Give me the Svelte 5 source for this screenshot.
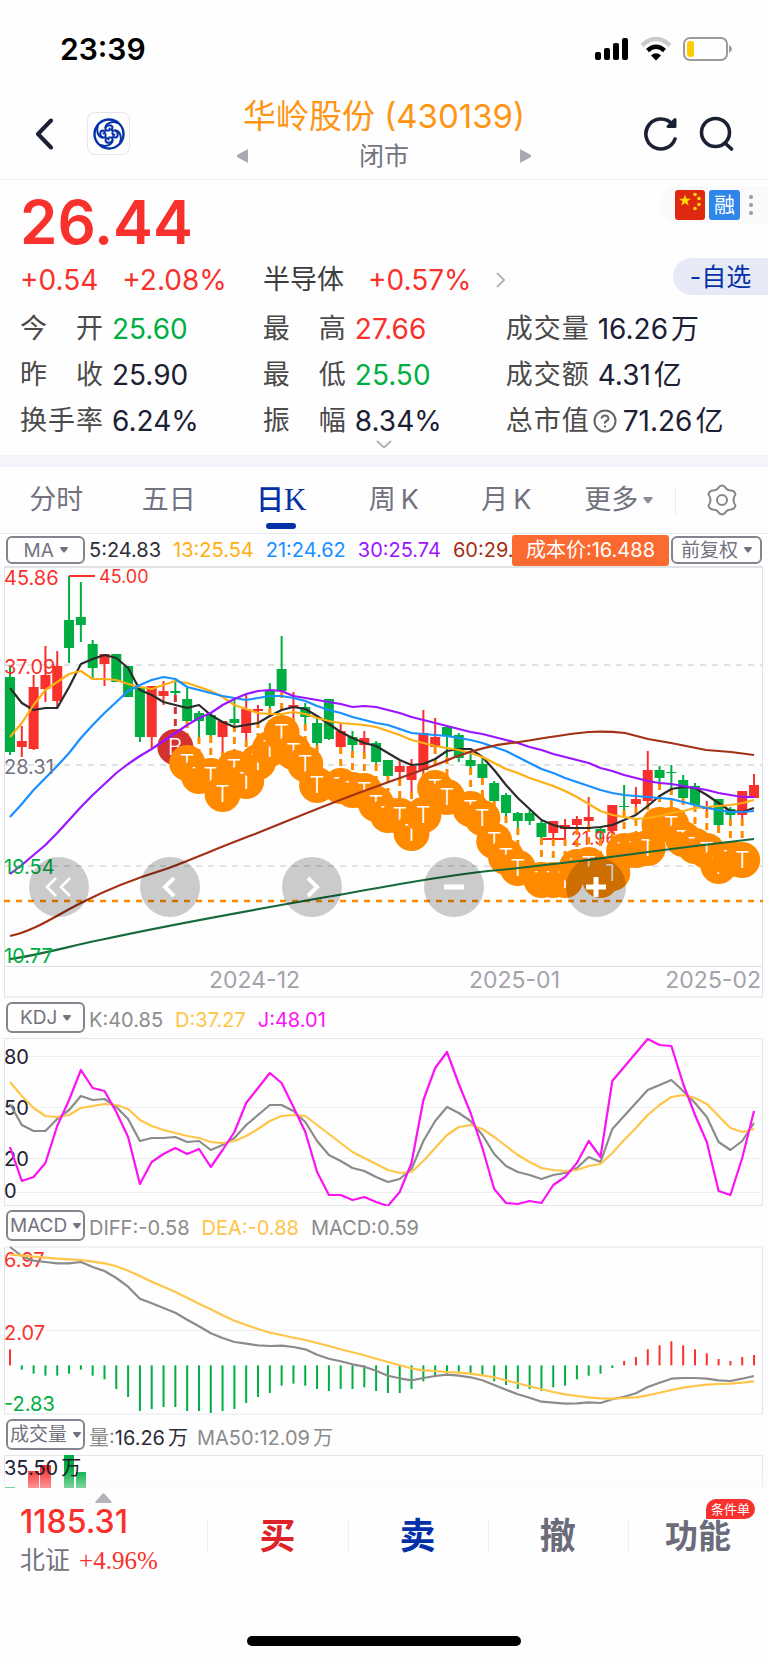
<script>
  const STEP = 11.81;
  const xAt = (i) => 10 + i * STEP;
  const third = (base) => (v) => base + v / 3;

  const toLine = (values, toY = (v) => v) =>
    values.map((v, i) => `${xAt(i).toFixed(1)},${toY(v).toFixed(1)}`).join(' ');

  const stats = [
    { label: '今 开', value: '25.60', tone: 'down' },
    { label: '最 高', value: '27.66', tone: 'up' },
    { label: '成交量', value: '16.26', unit: '万' },
    { label: '昨 收', value: '25.90' },
    { label: '最 低', value: '25.50', tone: 'down' },
    { label: '成交额', value: '4.31', unit: '亿' },
    { label: '换手率', value: '6.24%' },
    { label: '振 幅', value: '8.34%' },
    { label: '总市值', value: '71.26', unit: '亿', help: true },
  ];

  const tabs = ['分时', '五日', '日K', '周K', '月K', '更多'];
  let activeTab = $state('日K');

  // body top, body bottom, high, low, rising
  const candles = [
    [677, 752, 667, 755, 0], [741, 747, 726, 757, 1], [687, 749, 675, 750, 1], [675, 689, 646, 702, 1],
    [666, 701, 651, 707, 1], [620, 648, 576, 663, 0], [617, 625, 582, 642, 0], [644, 668, 640, 678, 0],
    [654, 664, 654, 686, 1], [654, 682, 654, 682, 0], [666, 697, 666, 697, 0], [688, 737, 688, 742, 0],
    [686, 737, 686, 748, 1], [691, 696, 681, 705, 1], [691, 693, 681, 695, 0], [699, 721, 688, 721, 0],
    [713, 721, 711, 737, 0], [715, 735, 713, 736, 0], [721, 737, 721, 752, 1], [719, 723, 698, 725, 0],
    [709, 733, 694, 740, 1], [709, 711, 705, 721, 1], [691, 706, 683, 708, 0], [669, 691, 636, 691, 0],
    [705, 708, 692, 718, 1], [707, 717, 703, 724, 0], [723, 743, 718, 745, 0], [699, 739, 699, 740, 0],
    [731, 747, 723, 747, 1], [737, 745, 731, 751, 0], [738, 745, 731, 752, 1], [743, 762, 741, 764, 0],
    [760, 776, 760, 776, 0], [766, 772, 760, 779, 1], [766, 780, 759, 792, 1], [733, 770, 710, 773, 1],
    [737, 747, 718, 747, 1], [727, 736, 726, 757, 0], [735, 758, 733, 762, 0], [760, 766, 753, 768, 0],
    [764, 778, 758, 778, 0], [783, 801, 781, 801, 0], [795, 813, 793, 816, 0], [813, 821, 812, 828, 0],
    [813, 821, 810, 825, 0], [823, 837, 821, 838, 0], [821, 833, 821, 839, 1], [825, 829, 819, 839, 1],
    [819, 825, 816, 828, 1], [817, 821, 797, 825, 1], [829, 833, 828, 839, 0], [805, 831, 805, 833, 1],
    [806, 807, 785, 810, 0], [799, 804, 787, 807, 1], [770, 801, 751, 803, 1], [770, 778, 766, 783, 0],
    [772, 773, 765, 788, 0], [780, 798, 775, 798, 0], [786, 805, 783, 805, 0], [807, 809, 801, 811, 1],
    [799, 825, 799, 826, 0], [809, 815, 807, 819, 0], [791, 815, 791, 819, 1], [785, 798, 774, 798, 1],
  ];

  // trade marks: candle index -> centre of the disc
  const marks = [
    [14, 747, 'B'], [15, 763], [16, 776], [17, 776], [18, 794], [19, 768], [20, 781], [21, 762],
    [22, 749], [23, 733], [24, 752], [25, 764], [26, 785], [28, 786], [29, 790], [30, 791],
    [31, 804], [32, 815], [33, 816], [34, 833], [35, 815], [36, 788], [37, 797], [39, 809],
    [40, 818], [41, 841], [42, 857], [43, 868], [45, 880], [46, 880], [47, 880], [48, 867],
    [49, 865], [50, 880], [51, 873], [52, 851], [53, 850], [54, 848], [55, 825], [56, 825],
    [57, 839], [58, 846], [59, 851], [60, 866], [61, 859], [62, 860],
  ].map(([i, y, type = 'T']) => ({ x: xAt(i), y, type, from: candles[i][3] }));

  const ma5 = [
    688, 703, 710, 708, 708, 687, 664, 659, 655, 658, 668, 690, 695, 702, 705, 708, 705, 715, 722, 727, 725, 723,
    716, 710, 707, 709, 716, 724, 732, 738, 743, 746, 753, 760, 765, 764, 759, 751, 749, 749, 757, 770, 785, 798,
    809, 820, 825, 828, 828, 828, 827, 825, 820, 815, 806, 796, 789, 787, 788, 795, 803, 811, 812, 808,
  ];
  const ma13 = [
    737, 723, 705, 690, 682, 674, 671, 679, 679, 680, 684, 687, 689, 685, 681, 683, 687, 691, 697, 705, 709, 713,
    714, 714, 712, 714, 718, 721, 723, 724, 725, 727, 731, 735, 740, 743, 746, 748, 750, 753, 757, 763, 769, 773,
    778, 782, 786, 791, 797, 804, 811, 815, 817, 819, 818, 816, 813, 811, 808, 807, 806, 805, 803, 800,
  ];
  const ma21 = [
    817, 804, 790, 778, 766, 753, 738, 725, 713, 702, 691, 685, 680, 677, 679, 687, 690, 693, 696, 698, 700, 698,
    696, 696, 698, 701, 706, 710, 713, 717, 720, 723, 725, 729, 733, 734, 735, 736, 738, 740, 743, 747, 751, 757,
    763, 769, 773, 778, 782, 786, 790, 793, 795, 796, 797, 798, 799, 802, 805, 808, 810, 812, 812, 811,
  ];
  const ma30 = [
    874, 865, 855, 845, 833, 820, 807, 795, 784, 773, 764, 756, 749, 741, 733, 725, 718, 713, 705, 699, 694, 691,
    690, 691, 696, 698, 700, 702, 704, 707, 706, 707, 710, 713, 717, 720, 723, 726, 729, 732, 734, 737, 740, 743,
    747, 750, 754, 757, 760, 763, 768, 771, 775, 778, 781, 783, 784, 786, 788, 790, 793, 795, 797, 797,
  ];
  const ma60 =
    'M10 936C35 931 60 913 83 902C112 887 140 877 166 869C198 857 225 845 255 834C300 816 330 803 375 787C405 776 430 768 455 757C475 750 492 745 512 743C540 739 565 734 588 732Q606 731 625 733L648 739L671 743L706 750L731 752L754 755';
  const maLong = 'M10 959C40 955 70 946 100 940C200 918 300 902 400 884Q470 872 510 869L588 860L648 852L695 846L754 839';

  const kLine = [
    1104, 1125, 1131, 1131, 1119, 1110, 1096, 1100, 1099, 1107, 1119, 1141, 1138, 1138, 1137, 1142, 1141, 1150,
    1145, 1138, 1125, 1115, 1105, 1105, 1111, 1122, 1141, 1155, 1161, 1168, 1171, 1177, 1182, 1179, 1169, 1141,
    1121, 1107, 1113, 1121, 1135, 1154, 1166, 1172, 1175, 1179, 1175, 1173, 1168, 1157, 1162, 1129, 1116, 1103,
    1090, 1085, 1080, 1091, 1103, 1117, 1142, 1150, 1141, 1123,
  ];
  const dLine = [
    1082, 1096, 1108, 1116, 1117, 1115, 1108, 1106, 1104, 1105, 1109, 1120, 1126, 1130, 1133, 1136, 1138, 1142,
    1143, 1141, 1136, 1129, 1121, 1116, 1115, 1116, 1125, 1134, 1143, 1152, 1158, 1164, 1170, 1173, 1172, 1161,
    1148, 1135, 1127, 1125, 1129, 1137, 1146, 1155, 1162, 1168, 1170, 1171, 1170, 1166, 1164, 1153, 1140, 1128,
    1115, 1105, 1097, 1095, 1098, 1104, 1116, 1128, 1132, 1129,
  ];
  const jLine = [
    1147, 1181, 1177, 1163, 1126, 1100, 1070, 1088, 1091, 1112, 1137, 1184, 1162, 1154, 1148, 1154, 1149, 1167,
    1150, 1132, 1103, 1088, 1073, 1083, 1107, 1132, 1172, 1195, 1195, 1200, 1197, 1202, 1206, 1192, 1163, 1100,
    1068, 1052, 1084, 1113, 1148, 1189, 1203, 1204, 1201, 1203, 1185, 1177, 1163, 1141, 1157, 1081, 1067, 1053,
    1039, 1045, 1046, 1084, 1115, 1142, 1191, 1195, 1158, 1111,
  ];

  // MACD series are kept in thirds of a pixel below the panel base
  const macdY = third(1205);
  const ZERO = 481;
  const macd = [
    433, 494, 506, 512, 512, 506, 494, 512, 523, 552, 576, 618, 612, 606, 606, 618, 618, 624, 618, 612, 594, 576,
    564, 542, 536, 542, 552, 558, 552, 552, 547, 558, 564, 564, 552, 529, 512, 506, 500, 506, 512, 529, 540, 552,
    552, 558, 547, 542, 523, 512, 506, 489, 468, 456, 433, 421, 409, 421, 433, 445, 462, 468, 456, 450,
  ];
  const diff = [
    126, 153, 167, 171, 175, 175, 171, 186, 198, 219, 245, 281, 295, 309, 323, 344, 364, 385, 399, 411, 416, 421,
    423, 422, 426, 433, 449, 461, 469, 478, 485, 497, 512, 520, 526, 519, 513, 509, 512, 517, 526, 540, 554, 568,
    578, 590, 593, 596, 595, 592, 594, 583, 575, 565, 546, 533, 521, 519, 519, 521, 526, 528, 521, 513,
  ];
  const dea = [
    148, 152, 155, 158, 161, 163, 165, 170, 175, 184, 197, 213, 230, 245, 261, 278, 296, 313, 331, 347, 360, 372,
    383, 390, 398, 405, 414, 423, 433, 442, 451, 461, 471, 481, 490, 496, 498, 501, 503, 506, 511, 517, 526, 535,
    544, 553, 561, 568, 573, 577, 580, 581, 579, 577, 571, 563, 555, 548, 543, 539, 537, 536, 533, 529,
  ];
</script>

{#snippet picker(name, label, wide = false)}
  <label class="picker" class:wide>
    <select aria-label={label}>
      <option>{name}</option>
    </select>
    <svg class="caret" viewBox="0 0 8 6" aria-hidden="true"><path d="M0 1Q0 0 1 0H7Q8 0 8 1L5 5Q4 6 3 5Z" /></svg>
  </label>
{/snippet}

<div class="screen">
  <div class="status">
    <span class="clock">23:39</span>
    <div class="status-icons">
      <svg width="34" height="22" viewBox="0 0 34 22" aria-hidden="true">
        <rect x="0" y="14" width="6" height="8" rx="2" />
        <rect x="9" y="10" width="6" height="12" rx="2" />
        <rect x="18" y="5" width="6" height="17" rx="2" />
        <rect x="27" y="0" width="6" height="22" rx="2" />
      </svg>
      <svg width="32" height="24" viewBox="0 0 32 24" aria-hidden="true">
        <path d="M2 8.500Q16 -4.500 30 8.500" fill="none" stroke="#cbcbcb" stroke-width="4.500" />
        <path d="M7.500 13.500Q16 6 24.500 13.500" fill="none" stroke="#000" stroke-width="4.500" />
        <path d="M11 18.500Q16 14 21 18.500L16 23.500Z" />
      </svg>
      <svg width="50" height="24" viewBox="0 0 50 24" aria-hidden="true">
        <rect x="1" y="1" width="43" height="22" rx="6" fill="none" stroke="#9b9b9b" stroke-width="2" />
        <rect x="4" y="4" width="7" height="16" rx="3" fill="#fc0" />
        <path d="M46 8Q49 9.500 49 12T46 16Z" fill="#9b9b9b" />
      </svg>
    </div>
  </div>

  <header>
    <div class="side">
      <button class="plain" aria-label="返回">
        <svg width="19" height="32" viewBox="0 0 19 32" fill="none" stroke="#1b2033" stroke-width="4" stroke-linecap="round" stroke-linejoin="round">
          <path d="M16 2.500L3 16L16 29.500" />
        </svg>
      </button>
      <button class="plain logo" aria-label="券商首页">
        <svg width="32" height="32" viewBox="0 0 32 32" fill="none" stroke="#0531a8" stroke-width="2" stroke-linecap="round">
          <circle cx="16" cy="16" r="14.500" stroke-width="2.400" />
          {#each [0, 90, 180, 270] as turn}
            <g transform="rotate({turn} 16 16)">
              <path d="M24.500 5C20 3 13 4.500 12.500 9.500V12.500H16" />
              <path d="M12.500 9.500C14 6.500 19 6.500 19.500 9.500C19.500 12 17 12.500 16.500 10.500" />
            </g>
          {/each}
        </svg>
      </button>
    </div>
    <div class="heading">
      <h1>华岭股份 (430139)</h1>
      <div class="market">
        <button class="plain" aria-label="上一只">
          <svg width="12" height="14" viewBox="0 0 12 14"><path d="M11 0V14L0 8Q-.5 7 0 6Z" fill="#a9a9b2" /></svg>
        </button>
        <span>闭市</span>
        <button class="plain" aria-label="下一只">
          <svg width="12" height="14" viewBox="0 0 12 14"><path d="M1 0V14L12 8Q12.500 7 12 6Z" fill="#a9a9b2" /></svg>
        </button>
      </div>
    </div>
    <div class="side end">
      <button class="plain" aria-label="刷新">
        <svg width="36" height="36" viewBox="0 0 36 36" fill="none" stroke="#1b2033" stroke-width="3.600" stroke-linecap="round" stroke-linejoin="round">
          <path d="M32 23A15 15 0 1 1 29.500 8.500" />
          <path d="M32 3.500V10.500H25Z" fill="#1b2033" stroke-width="3" />
        </svg>
      </button>
      <button class="plain" aria-label="搜索">
        <svg width="36" height="36" viewBox="0 0 36 36" fill="none" stroke="#1b2033" stroke-width="3.600" stroke-linecap="round">
          <circle cx="16.500" cy="16.500" r="14" />
          <path d="M26 27L32.500 33" />
        </svg>
      </button>
    </div>
  </header>

  <section class="quote">
    <div class="price-row">
      <strong class="price">26.44</strong>
      <button class="plain tags" aria-label="标签">
        <svg width="30" height="30" viewBox="0 0 30 30" aria-hidden="true">
          <rect width="30" height="30" rx="3" fill="#de2910" />
          <path d="M10 4.500L11.500 8.700H16L12.400 11.300L13.700 15.500L10 13L6.300 15.500L7.600 11.300L4 8.700H8.500Z" fill="#ffde00" />
          <g fill="#ffde00"><circle cx="20" cy="4.500" r="1.800" /><circle cx="24" cy="8.500" r="1.800" /><circle cx="24" cy="14.500" r="1.800" /><circle cx="20" cy="18.500" r="1.800" /></g>
        </svg>
        <span class="margin-tag">融</span>
        <svg width="4" height="22" viewBox="0 0 4 22" fill="#9a9aa0" aria-hidden="true"><circle cx="2" cy="3" r="2" /><circle cx="2" cy="11" r="2" /><circle cx="2" cy="19" r="2" /></svg>
      </button>
    </div>

    <div class="change-row">
      <div class="change up"><span>+0.54</span><span>+2.08%</span></div>
      <a class="sector" href="#sector">
        <span class="sector-name">半导体</span><span class="up">+0.57%</span>
        <svg width="10" height="18" viewBox="0 0 10 18" fill="none" stroke="#b4b4b8" stroke-width="2"><path d="M1 2L8 9L1 16" /></svg>
      </a>
      <button class="plain watch">-自选</button>
    </div>

    <dl class="stats">
      {#each stats as s}
        <div>
          <dt>{s.label}</dt>
          {#if s.help}
            <svg class="help" width="24" height="24" viewBox="0 0 24 24" fill="none" stroke="#666" stroke-width="2">
              <circle cx="12" cy="12" r="10.500" />
              <path d="M8.500 9.500Q9 6.500 12 6.500T15.500 9.500Q15.500 11 13.500 12T12 14.500M12 16.500V18.500" />
            </svg>
          {/if}
          <dd class={s.tone}>{s.value}{#if s.unit}<span class="unit">{s.unit}</span>{/if}</dd>
        </div>
      {/each}
    </dl>
    <button class="plain expand" aria-label="展开">
      <svg width="16" height="9" viewBox="0 0 16 9" fill="none" stroke="#b4b4b8" stroke-width="2"><path d="M1 1L8 7.500L15 1" /></svg>
    </button>
  </section>

  <nav class="tabs">
    {#each tabs as tab}
      <button class="plain tab" class:active={activeTab === tab} onclick={() => (activeTab = tab)}>
        {#if tab.endsWith('K')}{tab[0]}<span class="k">K</span>{:else}{tab}{/if}
        {#if tab === '更多'}
          <svg class="caret" viewBox="0 0 8 6" aria-hidden="true"><path d="M0 1Q0 0 1 0H7Q8 0 8 1L5 5Q4 6 3 5Z" /></svg>
        {/if}
      </button>
    {/each}
    <button class="plain settings" aria-label="设置">
      <svg width="30" height="32" viewBox="0 0 30 32" fill="none" stroke="#85858c" stroke-width="2" stroke-linejoin="round">
        <path d="M12 3Q15 0 18 3Q20 6.500 24 6.500Q28 7 28.500 10.500Q26.500 13 26.500 16Q26.500 19 28.500 21.500Q28 25 24 25.500Q20 25.500 18 29Q15 32 12 29Q10 25.500 6 25.500Q2 25 1.500 21.500Q3.500 19 3.500 16Q3.500 13 1.500 10.500Q2 7 6 6.500Q10 6.500 12 3Z" />
        <circle cx="15" cy="16" r="5" />
      </svg>
    </button>
  </nav>

  <div class="ma-row">
    {@render picker('MA', '主图指标')}
    <div class="values">
      <span class="ink">5:24.83</span>
      <span class="amber">13:25.54</span>
      <span class="blue">21:24.62</span>
      <span class="purple">30:25.74</span>
      <span class="brown">60:29.</span>
    </div>
    <span class="cost">成本价:16.488</span>
    {@render picker('前复权', '复权方式', true)}
  </div>

  <div class="chart">
    <svg viewBox="0 566 768 432" role="img" aria-label="日K线图">
      <g fill="none" stroke="#dfe2e6">
        <path d="M4 567H763" stroke-width="2" />
        <path d="M4.500 566V997M762.500 566V997M4 966.500H763M4 997H763" />
        <path d="M4 665H763M4 765H763M4 866H763" stroke-width="2" stroke-dasharray="6 6" />
      </g>
      <path d="M4 901H763" stroke="#ff8a00" stroke-width="2.400" stroke-dasharray="6 6" />

      {#each candles as [top, bottom, high, low, rising], i}
        <g fill={rising ? '#f9312d' : '#00ae42'}>
          <rect x={xAt(i) - 5} y={top} width="10" height={bottom - top} />
          <rect x={xAt(i) - 1} y={high} width="2" height={low - high} />
        </g>
      {/each}

      <path d="M69 576H95M541 839H566" stroke="#f9312d" stroke-width="2" />
      <g class="peak up">
        <text x="99" y="583">45.00</text>
        <text x="571" y="845">21.96</text>
      </g>

      {#each marks as m}
        <line x1={m.x} x2={m.x} y1={m.from} y2={m.y} stroke={m.type === 'B' ? '#d43131' : '#ff8a00'} stroke-width="3" stroke-dasharray="7 5" />
      {/each}
      {#each marks as m}
        <circle cx={m.x} cy={m.y} r="18" fill={m.type === 'B' ? '#d43131' : '#ff8a00'} />
        <text class="mark" x={m.x} y={m.y + 8}>{m.type}</text>
      {/each}

      <g class="lines">
        <polyline points={toLine(ma5)} stroke="#2b2b2b" />
        <polyline points={toLine(ma13)} stroke="#ffae13" />
        <polyline points={toLine(ma21)} stroke="#1890ff" />
        <polyline points={toLine(ma30)} stroke="#9b14ff" />
        <path d={ma60} stroke="#a23014" />
        <path d={maLong} stroke="#176b3b" />
      </g>

      <g class="axis">
        <text class="up" x="4" y="585">45.86</text>
        <text class="up" x="4" y="674">37.09</text>
        <text class="flat" x="4" y="774">28.31</text>
        <text class="down" x="4" y="874">19.54</text>
        <text class="down" x="4" y="963">10.77</text>
      </g>
      <g class="date">
        <text x="209" y="988">2024-12</text>
        <text x="469" y="988">2025-01</text>
        <text x="761" y="988" text-anchor="end">2025-02</text>
      </g>
    </svg>
    <div class="controls">
      <button class="plain round" aria-label="收起"><svg viewBox="0 0 60 60"><path d="M27 21L18 30L27 39M41 21L32 30L41 39" stroke-width="2.500" /></svg></button>
      <div class="steps">
        <button class="plain round" aria-label="左移"><svg viewBox="0 0 60 60"><path d="M34 21L25 30L34 39" /></svg></button>
        <button class="plain round" aria-label="右移"><svg viewBox="0 0 60 60"><path d="M26 21L35 30L26 39" /></svg></button>
        <button class="plain round" aria-label="缩小"><svg viewBox="0 0 60 60"><path d="M20 30H40" stroke-width="5" /></svg></button>
        <button class="plain round" aria-label="放大"><svg viewBox="0 0 60 60"><path d="M20 30H40M30 20V40" stroke-width="5" /></svg></button>
      </div>
    </div>
  </div>

  <div class="sub-row">
    {@render picker('KDJ', '副图指标一')}
    <div class="values"><span class="gray">K:40.85</span><span class="gold">D:37.27</span><span class="pink">J:48.01</span></div>
  </div>
  <svg class="panel" viewBox="0 1038 768 168" role="img" aria-label="KDJ">
    <g fill="none" stroke="#e3e6e9">
      <rect x="4.500" y="1038.500" width="758" height="167" />
      <path d="M4 1056.500H763M4 1107.500H763M4 1158.500H763M4 1192.500H763" stroke="#eceef0" />
    </g>
    <g class="axis ink">
      <text x="4" y="1064">80</text>
      <text x="4" y="1115">50</text>
      <text x="4" y="1166">20</text>
      <text x="4" y="1198">0</text>
    </g>
    <g class="lines">
      <polyline points={toLine(kLine)} stroke="#8b8b8b" />
      <polyline points={toLine(dLine)} stroke="#ffc548" />
      <polyline points={toLine(jLine)} stroke="#fb12f5" />
    </g>
  </svg>

  <div class="sub-row">
    {@render picker('MACD', '副图指标二')}
    <div class="values"><span class="gray">DIFF:-0.58</span><span class="gold">DEA:-0.88</span><span class="gray">MACD:0.59</span></div>
  </div>
  <svg class="panel" viewBox="0 1246 768 169" role="img" aria-label="MACD">
    <g fill="none" stroke="#e3e6e9">
      <rect x="4.500" y="1247" width="758" height="167" />
      <path d="M4 1330.500H763" stroke="#eceef0" />
    </g>
    <g class="axis">
      <text class="up" x="4" y="1267">6.97</text>
      <text class="up" x="4" y="1340">2.07</text>
      <text class="down" x="4" y="1411">-2.83</text>
    </g>
    {#each macd as v, i}
      <rect x={xAt(i) - 1} y={macdY(Math.min(v, ZERO))} width="2" height={Math.abs(v - ZERO) / 3} fill={v < ZERO ? '#f9312d' : '#00ae42'} />
    {/each}
    <g class="lines">
      <polyline points={toLine(diff, macdY)} stroke="#8b8b8b" />
      <polyline points={toLine(dea, macdY)} stroke="#ffc548" />
    </g>
  </svg>

  <div class="sub-row">
    {@render picker('成交量', '副图指标三')}
    <div class="values volume"><span class="ink"><span class="gray">量:</span>16.26<span class="unit">万</span></span><span class="gray">MA50:12.09<span class="unit">万</span></span></div>
  </div>
  <svg class="panel" viewBox="0 1455 768 33" role="img" aria-label="成交量">
    <defs>
      <linearGradient id="fade" x1="0" y1="0" x2="0" y2="1">
        <stop offset="0" stop-color="#fafafc" stop-opacity="0" />
        <stop offset="1" stop-color="#fafafc" stop-opacity=".5" />
      </linearGradient>
    </defs>
    <path d="M4.500 1488V1455.500H762.500V1488" fill="none" stroke="#e3e6e9" />
    <g fill="#f9312d"><rect x="28" y="1471" width="11" height="17" /><rect x="40" y="1465" width="11" height="23" /></g>
    <g fill="#00ae42"><rect x="64" y="1455" width="10" height="33" /><rect x="76" y="1472" width="10" height="16" /><rect x="5" y="1487" width="10" height="1" /></g>
    <rect y="1468" width="768" height="20" fill="url(#fade)" />
    <text class="axis ink" x="4" y="1475">35.50<tspan dx="3">万</tspan></text>
  </svg>

  <footer>
    <div class="actions">
      <a class="index" href="#index">
        <svg class="expand-up" width="17" height="10" viewBox="0 0 17 10"><path d="M7.500 .8Q8.500 -.3 9.500 .8L16.500 8.500Q17 10 15.500 10H1.500Q0 10 .5 8.500Z" fill="#b4b4b8" /></svg>
        <strong>1185.31</strong>
        <span class="index-name">北证 <em>+4.96%</em></span>
      </a>
      <button class="plain act buy">买</button>
      <button class="plain act sell">卖</button>
      <button class="plain act">撤</button>
      <button class="plain act more"><span class="more-label">功能<span class="badge">条件单</span></span></button>
    </div>
    <div class="home"></div>
  </footer>
</div>

<style>
  :global(body) {
    background: #fefefe;
  }

  .screen {
    font-family: Inter, 'Noto Sans CJK SC', sans-serif;
    color: #1b2033;
    background: #fefefe;
  }

  .plain {
    display: flex;
    align-items: center;
    justify-content: center;
    padding: 0;
    border: 0;
    background: none;
    color: inherit;
    font: inherit;
    cursor: pointer;
  }

  a {
    color: inherit;
    text-decoration: none;
  }

  svg {
    display: block;
    flex: none;
  }

  .up { color: #f9312d; fill: #f9312d; }
  .down { color: #00ae42; fill: #00ae42; }
  .flat { fill: #73737f; }
  .ink { color: #2b2d38; fill: #1b2033; }
  .gray { color: #8b8b8b; }
  .amber { color: #ffae13; }
  .gold { color: #ffc548; }
  .blue { color: #1890ff; }
  .purple { color: #9b14ff; }
  .brown { color: #a23014; }
  .pink { color: #fb12f5; }

  .status {
    display: flex;
    align-items: center;
    justify-content: space-between;
    height: 88px;
    padding: 10px 35px 0 60px;
    box-sizing: border-box;
    color: #000;
  }

  .clock {
    font-size: 30px;
    font-weight: 600;
  }

  .status-icons {
    display: flex;
    align-items: center;
    gap: 11px;
  }

  header {
    display: grid;
    grid-template-columns: 1fr auto 1fr;
    height: 92px;
    box-sizing: border-box;
    border-bottom: 1px solid #f0f0f2;
  }

  .side {
    display: flex;
    align-items: center;
    gap: 33px;
    padding: 4px 33px 0 35px;
  }

  .side.end {
    justify-content: flex-end;
    gap: 20px;
  }

  .side svg {
    margin-bottom: 4px;
  }

  .side .logo {
    margin-bottom: 4px;
  }

  .side .logo svg {
    margin: 0;
  }

  .logo {
    width: 43px;
    height: 43px;
    box-sizing: border-box;
    border: 1px solid #e6e6ea;
    border-radius: 8px;
  }

  .heading {
    text-align: center;
  }

  h1 {
    margin: 7px 0 0;
    font-size: 33px;
    font-weight: 400;
    line-height: 42px;
    color: #ff9514;
  }

  .market {
    display: flex;
    align-items: center;
    justify-content: space-between;
    width: 294px;
    margin: 0 auto;
    font-size: 25px;
    line-height: 38px;
    color: #73737f;
  }

  .quote {
    padding-top: 6px;
    border-bottom: 12px solid #f4f5fa;
  }

  .price-row {
    display: flex;
    align-items: flex-start;
    justify-content: space-between;
    padding-left: 20px;
  }

  .price {
    font-size: 60px;
    font-weight: 600;
    line-height: 72px;
    color: #f9312d;
  }

  .tags {
    gap: 4px;
    height: 37px;
    padding: 0 15px;
    border-radius: 19px 0 0 19px;
    background: #fafafa;
  }

  .margin-tag {
    width: 31px;
    margin-right: 5px;
    border-radius: 3px;
    background: #2f86ea;
    color: #fff;
    font-size: 21px;
    line-height: 30px;
  }

  .change-row {
    display: grid;
    grid-template-columns: 243px 1fr auto;
    height: 44px;
    padding-left: 20px;
    font-size: 28px;
    line-height: 44px;
  }

  .change {
    display: flex;
    gap: 24px;
  }

  .sector {
    display: flex;
    align-items: center;
    gap: 24px;
  }

  .sector-name {
    font-size: 27px;
    color: #3d3d3d;
  }

  .watch {
    width: 95px;
    height: 37px;
    border-radius: 19px 0 0 19px;
    background: #e6eaf6;
    color: #0531a8;
    font-size: 25px;
  }

  .stats {
    display: grid;
    grid-template-columns: 1fr 1fr 1.08fr;
    margin: 4px 0 0;
    padding-left: 20px;
    font-size: 28px;
    line-height: 46px;
  }

  .stats > div {
    display: flex;
    align-items: center;
  }

  dt {
    width: 83px;
    margin-right: 9px;
    font-size: 27px;
    text-align-last: justify;
    color: #4a4a4a;
  }

  .help {
    margin: 0 6px 0 -5px;
  }

  dd {
    margin: 0;
    white-space: nowrap;
  }

  .unit {
    margin-left: 3px;
  }

  .expand {
    align-items: flex-start;
    width: 100%;
    height: 15px;
    margin-top: -4px;
  }

  .caret {
    width: 8px;
    height: 6px;
    fill: #73737f;
  }

  .tabs {
    display: flex;
    height: 67px;
    border-bottom: 1px solid #e9eaee;
    box-sizing: border-box;
    font-size: 27px;
    color: #73737f;
  }

  .tab {
    position: relative;
    flex: 1;
    white-space: nowrap;
    line-height: 62px;
  }

  .tab .caret {
    width: 10px;
    height: 7px;
    margin-left: 5px;
    fill: #8e8e96;
  }

  .k {
    margin-left: 5px;
  }

  .active {
    color: #0531a8;
    font-weight: 500;
    font-size: 28px;
  }

  .active::after {
    content: '';
    position: absolute;
    bottom: 4px;
    left: calc(50% - 15px);
    width: 30px;
    height: 6px;
    border-radius: 3px;
    background: #0531a8;
  }

  .active .k {
    margin-left: 0;
    font-family: 'Liberation Serif', serif;
    font-size: 31px;
  }

  .settings {
    position: relative;
    width: 93px;
  }

  .settings::before {
    content: '';
    position: absolute;
    left: 0;
    top: 20px;
    width: 1px;
    height: 28px;
    background: #ececf0;
  }

  .ma-row,
  .sub-row {
    display: flex;
    align-items: center;
    box-sizing: border-box;
    padding: 0 6px;
    font-size: 20px;
  }

  .ma-row {
    height: 32px;
  }

  .sub-row {
    height: 40px;
    padding-bottom: 1px;
  }

  .picker {
    display: flex;
    flex: none;
    align-items: center;
    justify-content: center;
    gap: 5px;
    width: 79px;
    height: 31px;
    box-sizing: border-box;
    border: 2px solid #85858f;
    border-radius: 6px;
    font-size: 19px;
    color: #73737f;
  }

  .ma-row .picker {
    height: 28px;
  }

  .picker.wide {
    width: 91px;
  }

  select {
    appearance: none;
    padding: 0;
    border: 0;
    background: none;
    color: inherit;
    font: inherit;
  }

  .values {
    display: flex;
    flex: 1;
    gap: 12px;
    min-width: 0;
    margin-left: 4px;
    white-space: nowrap;
  }

  .sub-row .values {
    padding-top: 4px;
  }

  .values.volume {
    gap: 9px;
  }

  .cost {
    flex: none;
    width: 157px;
    margin-right: 2px;
    border-radius: 3px;
    background: #fb6a30;
    color: #fff;
    line-height: 31px;
    text-align: center;
  }

  .chart {
    position: relative;
  }

  .chart > svg,
  .panel {
    width: 100%;
    height: auto;
  }

  .axis {
    font-size: 20px;
  }

  .peak {
    font-size: 18px;
  }

  .date {
    font-size: 23px;
    fill: #a3a3ab;
  }

  .mark {
    font-size: 23px;
    font-weight: 300;
    fill: #fff;
    text-anchor: middle;
  }

  .lines {
    fill: none;
    stroke-width: 2.2;
    stroke-linejoin: round;
  }

  .controls {
    position: absolute;
    left: 29px;
    bottom: 81px;
    display: flex;
    gap: 51px;
  }

  .steps {
    display: flex;
    gap: 82px;
  }

  .round {
    width: 60px;
    height: 60px;
    border-radius: 50%;
    background: rgba(0, 0, 0, 0.2);
  }

  .round svg {
    width: 60px;
    height: 60px;
    fill: none;
    stroke: #fff;
    stroke-width: 4;
  }

  .actions {
    display: flex;
    height: 96px;
  }

  .index {
    position: relative;
    display: flex;
    flex-direction: column;
    flex: 0 0 27%;
    box-sizing: border-box;
    padding: 15px 0 0 20px;
    line-height: 38px;
  }

  .index strong {
    font-size: 32px;
    font-weight: 500;
    color: #f9312d;
  }

  .index-name {
    font-size: 25px;
    color: #73737f;
  }

  em {
    margin-left: 2px;
    font-family: 'Liberation Serif', serif;
    font-style: normal;
    color: #f9312d;
  }

  .expand-up {
    position: absolute;
    top: 5px;
    left: 95px;
  }

  .act {
    position: relative;
    flex: 1;
    font-size: 36px;
    font-weight: 700;
    line-height: 94px;
    color: #6b6c79;
  }

  .act::before {
    content: '';
    position: absolute;
    left: 0;
    top: 32px;
    width: 1px;
    height: 32px;
    background: #f0f0f6;
  }

  .buy {
    color: #db2329;
  }

  .sell {
    color: #0531a8;
  }

  .more {
    font-size: 33px;
  }

  .more-label {
    position: relative;
  }

  .badge {
    position: absolute;
    right: -24px;
    top: 10px;
    padding: 0 5px;
    border-radius: 10px 10px 10px 0;
    background: #f9312d;
    color: #fff;
    font-size: 13px;
    font-weight: 400;
    line-height: 20px;
    white-space: nowrap;
  }

  .home {
    width: 274px;
    height: 10px;
    margin: 52px auto 0;
    border-radius: 5px;
    background: #000;
  }

  footer {
    padding-bottom: 17px;
  }
</style>
